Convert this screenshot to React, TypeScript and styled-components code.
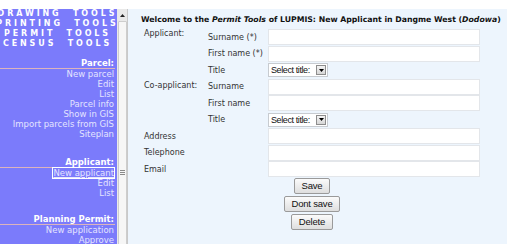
import React from "react";
import styled, { createGlobalStyle } from "styled-components";

const GlobalStyle = createGlobalStyle`
  html, body { margin: 0; padding: 0; background: #ffffff; }
  body { width: 507px; height: 244px; overflow: hidden; font-family: "DejaVu Sans", Verdana, sans-serif; }
  * { box-sizing: border-box; }
`;

const Page = styled.div`
  display: flex;
  flex-direction: column;
  width: 507px;
  height: 244px;
  overflow: hidden;
`;

const TopStrip = styled.div`
  height: 9px;
  background: #ffffff;
  flex: none;
`;

const Frames = styled.div`
  display: flex;
  flex: 1;
  min-height: 0;
`;

const Sidebar = styled.nav`
  width: 117px;
  flex: none;
  background: #7b7bfb;
  overflow: hidden;
  padding-right: 2px;
`;

const ToolLink = styled.div`
  height: 10px;
  line-height: 10px;
  font-size: 8px;
  font-weight: bold;
  color: #ffffff;
  text-align: center;
  letter-spacing: 2.9px;
  white-space: nowrap;
  margin: 0 -40px;
`;

const Section = styled.div<{ $gap: number }>`
  margin-top: ${(p) => p.$gap}px;
`;

const SectionHead = styled.div`
  height: 10px;
  line-height: 10px;
  font-size: 8.5px;
  font-weight: bold;
  color: #ffffff;
  text-align: right;
  padding-right: 1px;
  border-bottom: 1px solid #dcb4bc;
  box-sizing: content-box;
`;

const NavItem = styled.div`
  height: 10px;
  line-height: 10px;
  font-size: 8.5px;
  text-align: right;
  padding-right: 1px;
  white-space: nowrap;
`;

const NavLink = styled.a<{ $active?: boolean }>`
  color: #e4e4ff;
  text-decoration: ${(p) => (p.$active ? "underline" : "none")};
  outline: ${(p) => (p.$active ? "1px solid #ffffff" : "none")};
  outline-offset: 0px;
`;

const Scrollbar = styled.div`
  width: 11px;
  flex: none;
  background: #e9e9e9;
  border-right: 1px solid #c9c9c9;
  display: flex;
  flex-direction: column;
  align-items: center;
`;

const ScrollArrow = styled.div`
  height: 12px;
  width: 100%;
  display: flex;
  align-items: center;
  justify-content: center;
`;

const ScrollThumb = styled.div`
  width: 9px;
  flex: 1;
  margin-bottom: -80px;
  background: #f6f6f6;
  border: 1px solid #cdcdcd;
  border-radius: 1px;
  display: flex;
  align-items: center;
  justify-content: center;
`;

const Grip = styled.div`
  width: 5px;
  height: 6px;
  background: repeating-linear-gradient(to bottom, #8a8a8a 0 1px, transparent 1px 2px);
`;

const Main = styled.main`
  flex: 1;
  background: #edf5fd;
  padding: 5px 0 0 13px;
  font-family: "DejaVu Sans", Verdana, sans-serif;
  color: #222;
`;

const Title = styled.h1`
  margin: 0;
  font-size: 7.75px;
  line-height: 12px;
  font-weight: bold;
  color: #111;
  white-space: nowrap;
`;

const FormGrid = styled.div`
  display: grid;
  grid-template-columns: 64px 60px 212px;
  grid-auto-rows: 16.5px;
  margin: 3px 0 0 3px;
`;

const GroupLabel = styled.div<{ $rows: number; $offset: number }>`
  grid-row: span ${(p) => p.$rows};
  grid-column: 1;
  font-size: 8px;
  line-height: 10px;
  padding-top: ${(p) => p.$offset}px;
  color: #333;
`;

const WideLabel = styled.div`
  grid-column: 1 / span 2;
  font-size: 8px;
  display: flex;
  align-items: center;
  color: #333;
`;

const FieldLabel = styled.div`
  grid-column: 2;
  font-size: 8px;
  display: flex;
  align-items: center;
  color: #333;
  white-space: nowrap;
`;

const TextInput = styled.input`
  grid-column: 3;
  height: 16px;
  width: 212px;
  margin: 0;
  align-self: center;
  border: 1px solid #e3e6ea;
  background: #ffffff;
  padding: 0 2px;
  font-size: 8px;
`;

const SelectBox = styled.div`
  grid-column: 3;
  align-self: center;
  justify-self: start;
  display: flex;
  align-items: center;
  height: 14px;
  width: 60px;
  border: 1px solid #c7cbd0;
  background: #ffffff;
  font-family: "Liberation Sans", Arial, sans-serif;
  font-size: 9px;
  letter-spacing: -0.4px;
  color: #111;
  padding-left: 2px;
`;

const SelectText = styled.span`
  flex: 1;
  white-space: nowrap;
`;

const SelectButton = styled.span`
  width: 10px;
  height: 10px;
  margin-right: 1px;
  border: 1px solid #8d8d8d;
  background: linear-gradient(#f4f4f4, #d6d6d6);
  display: flex;
  align-items: center;
  justify-content: center;
`;

const Buttons = styled.div`
  width: 336px;
  margin-left: 3px;
  display: flex;
  flex-direction: column;
  align-items: center;
  gap: 2px;
`;

const Button = styled.button`
  height: 16px;
  padding: 0 7px;
  font-family: "Liberation Sans", Arial, sans-serif;
  font-size: 9.5px;
  letter-spacing: -0.2px;
  color: #111;
  border: 1px solid #9a9a9a;
  border-radius: 2px;
  background: linear-gradient(#fbfbfb, #dedede);
  line-height: 14px;
`;

const DownTri = () => (
  <svg width="5" height="3" viewBox="0 0 5 3">
    <path d="M0 0h5L2.5 3z" fill="#000" />
  </svg>
);

const sections = [
  { title: "Parcel:", gap: 9, items: ["New parcel", "Edit", "List", "Parcel info", "Show in GIS", "Import parcels from GIS", "Siteplan"] },
  { title: "Applicant:", gap: 18, items: ["New applicant", "Edit", "List"], active: "New applicant" },
  { title: "Planning Permit:", gap: 16, items: ["New application", "Approve"] },
];

const Select = () => (
  <SelectBox>
    <SelectText>Select title:</SelectText>
    <SelectButton>
      <DownTri />
    </SelectButton>
  </SelectBox>
);

export default function App() {
  return (
    <>
      <GlobalStyle />
      <Page>
        <TopStrip />
        <Frames>
          <Sidebar>
            {["DRAWING TOOLS", "PRINTING TOOLS", "PERMIT TOOLS", "CENSUS TOOLS"].map((t) => (
              <ToolLink key={t}>{t.replace(" ", "\u00a0\u00a0")}</ToolLink>
            ))}
            {sections.map((s) => (
              <Section key={s.title} $gap={s.gap}>
                <SectionHead>{s.title}</SectionHead>
                {s.items.map((i) => (
                  <NavItem key={i}>
                    <NavLink href="#" $active={s.active === i}>
                      {i}
                    </NavLink>
                  </NavItem>
                ))}
              </Section>
            ))}
          </Sidebar>
          <Scrollbar>
            <ScrollArrow>
              <svg width="5" height="3" viewBox="0 0 5 3">
                <path d="M0 3h5L2.5 0z" fill="#222" />
              </svg>
            </ScrollArrow>
            <ScrollThumb>
              <Grip />
            </ScrollThumb>
          </Scrollbar>
          <Main>
            <Title>
              Welcome to the <i>Permit Tools</i> of LUPMIS: New Applicant in Dangme West (<i>Dodowa</i>)
            </Title>
            <FormGrid>
              <GroupLabel $rows={3} $offset={0}>Applicant:</GroupLabel>
              <FieldLabel>Surname (*)</FieldLabel>
              <TextInput />
              <FieldLabel>First name (*)</FieldLabel>
              <TextInput />
              <FieldLabel>Title</FieldLabel>
              <Select />
              <GroupLabel $rows={3} $offset={2}>Co-applicant:</GroupLabel>
              <FieldLabel>Surname</FieldLabel>
              <TextInput />
              <FieldLabel>First name</FieldLabel>
              <TextInput />
              <FieldLabel>Title</FieldLabel>
              <Select />
              <WideLabel>Address</WideLabel>
              <TextInput />
              <WideLabel>Telephone</WideLabel>
              <TextInput />
              <WideLabel>Email</WideLabel>
              <TextInput />
            </FormGrid>
            <Buttons>
              <Button>Save</Button>
              <Button>Dont save</Button>
              <Button>Delete</Button>
            </Buttons>
          </Main>
        </Frames>
      </Page>
    </>
  );
}
